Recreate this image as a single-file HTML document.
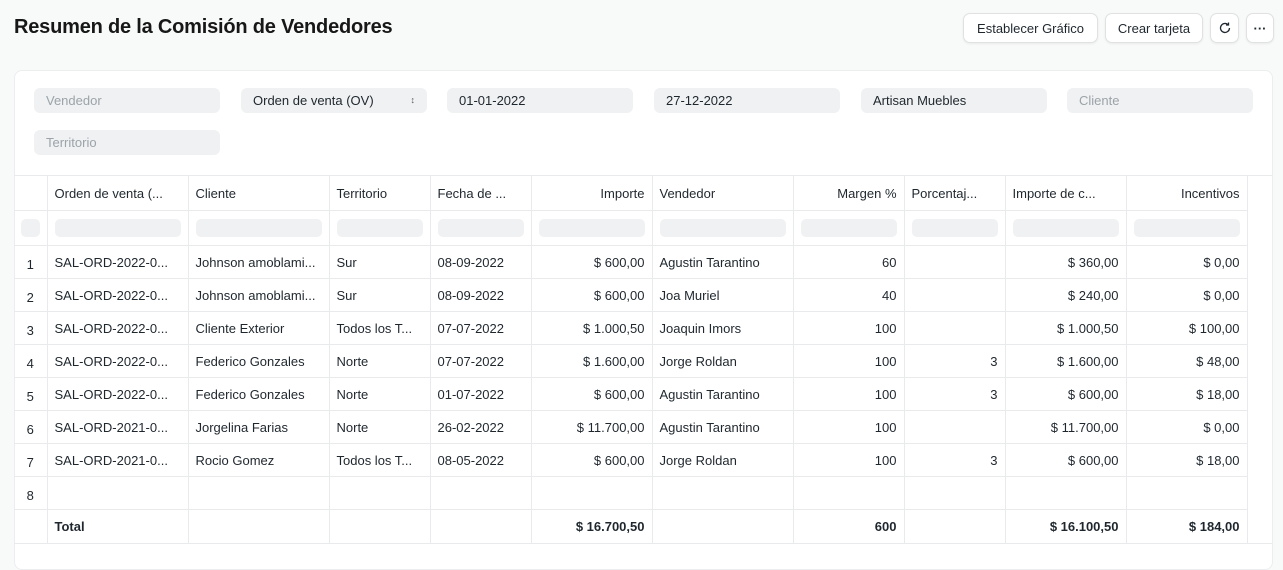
<!DOCTYPE html>
<html><head><meta charset="utf-8"><style>
*{box-sizing:border-box;margin:0;padding:0}
body{width:1283px;height:556px;overflow:hidden;background:#f8f9f9;font-family:"Liberation Sans",sans-serif;font-size:13px;color:#1f272e;position:relative}
h1{position:absolute;left:14px;top:16px;font-size:20px;font-weight:700;color:#171717;letter-spacing:-0.2px}
.btn{position:absolute;top:13px;height:30px;background:#fff;border:1px solid #dfe1e3;border-radius:7px;box-shadow:0 1px 2px rgba(0,0,0,.06);font-size:13px;display:flex;align-items:center;justify-content:center;color:#1f272e}
.card{position:absolute;left:14px;top:70px;width:1259px;height:500px;background:#fff;border:1px solid #ebedef;border-radius:8px}
.f{position:absolute;height:25px;width:186px;background:#f0f1f2;border-radius:6px;padding-left:12px;line-height:25px;font-size:13px;color:#1f272e}
.f.p{color:#9ca3a9}
table{position:absolute;left:-1px;top:104px;border-collapse:collapse;table-layout:fixed}
td{border:1px solid #e8eaec;height:33px;padding:0 7px;white-space:nowrap;overflow:hidden;font-size:13px}
tr.h td{height:35px}
tr.fl td{height:35px;padding:0 7px}
.r{text-align:right}
.n{padding:0 4px;vertical-align:bottom;padding-bottom:6px;text-align:center}
.bar{height:18px;background:#f0f1f2;border-radius:5px}
tr.t td{font-weight:700;height:34px}
td:first-child{border-left:none}
</style></head><body>
<h1>Resumen de la Comisión de Vendedores</h1>
<div class="btn" style="left:963px;width:135px">Establecer Gráfico</div>
<div class="btn" style="left:1105px;width:98px">Crear tarjeta</div>
<div class="btn" style="left:1210px;width:29px"><svg width="14" height="14" viewBox="0 0 14 14" fill="none" stroke="#1f272e" stroke-width="1.3"><path d="M11.5 7a4.5 4.5 0 1 1-1.4-3.3"/><path d="M10.5 1.5v2.5h-2.5"/></svg></div>
<div class="btn" style="left:1246px;width:28px;font-weight:700;letter-spacing:0px">···</div>
<div class="card">
<div class="f p" style="left:19px;top:17px">Vendedor</div>
<div class="f" style="left:226px;top:17px">Orden de venta (OV)<span style="position:absolute;right:12px;top:0;font-size:9px;color:#555">&#8597;</span></div>
<div class="f" style="left:432px;top:17px">01-01-2022</div>
<div class="f" style="left:639px;top:17px">27-12-2022</div>
<div class="f" style="left:846px;top:17px">Artisan Muebles</div>
<div class="f p" style="left:1052px;top:17px">Cliente</div>
<div class="f p" style="left:19px;top:59px">Territorio</div>
<table>
<colgroup><col style="width:33px"><col style="width:141px"><col style="width:141px"><col style="width:101px"><col style="width:101px"><col style="width:121px"><col style="width:141px"><col style="width:111px"><col style="width:101px"><col style="width:121px"><col style="width:121px"></colgroup>
<tr class="h"><td></td><td>Orden de venta (...</td><td>Cliente</td><td>Territorio</td><td>Fecha de ...</td><td class="r">Importe</td><td>Vendedor</td><td class="r">Margen %</td><td>Porcentaj...</td><td>Importe de c...</td><td class="r">Incentivos</td></tr>
<tr class="fl"><td style="padding:0 7px"><div class="bar"></div></td><td><div class="bar"></div></td><td><div class="bar"></div></td><td><div class="bar"></div></td><td><div class="bar"></div></td><td><div class="bar"></div></td><td><div class="bar"></div></td><td><div class="bar"></div></td><td><div class="bar"></div></td><td><div class="bar"></div></td><td><div class="bar"></div></td></tr>
<tr><td class="n">1</td><td>SAL-ORD-2022-0...</td><td>Johnson amoblami...</td><td>Sur</td><td>08-09-2022</td><td class="r">$ 600,00</td><td>Agustin Tarantino</td><td class="r">60</td><td></td><td class="r">$ 360,00</td><td class="r">$ 0,00</td></tr>
<tr><td class="n">2</td><td>SAL-ORD-2022-0...</td><td>Johnson amoblami...</td><td>Sur</td><td>08-09-2022</td><td class="r">$ 600,00</td><td>Joa Muriel</td><td class="r">40</td><td></td><td class="r">$ 240,00</td><td class="r">$ 0,00</td></tr>
<tr><td class="n">3</td><td>SAL-ORD-2022-0...</td><td>Cliente Exterior</td><td>Todos los T...</td><td>07-07-2022</td><td class="r">$ 1.000,50</td><td>Joaquin Imors</td><td class="r">100</td><td></td><td class="r">$ 1.000,50</td><td class="r">$ 100,00</td></tr>
<tr><td class="n">4</td><td>SAL-ORD-2022-0...</td><td>Federico Gonzales</td><td>Norte</td><td>07-07-2022</td><td class="r">$ 1.600,00</td><td>Jorge Roldan</td><td class="r">100</td><td class="r">3</td><td class="r">$ 1.600,00</td><td class="r">$ 48,00</td></tr>
<tr><td class="n">5</td><td>SAL-ORD-2022-0...</td><td>Federico Gonzales</td><td>Norte</td><td>01-07-2022</td><td class="r">$ 600,00</td><td>Agustin Tarantino</td><td class="r">100</td><td class="r">3</td><td class="r">$ 600,00</td><td class="r">$ 18,00</td></tr>
<tr><td class="n">6</td><td>SAL-ORD-2021-0...</td><td>Jorgelina Farias</td><td>Norte</td><td>26-02-2022</td><td class="r">$ 11.700,00</td><td>Agustin Tarantino</td><td class="r">100</td><td></td><td class="r">$ 11.700,00</td><td class="r">$ 0,00</td></tr>
<tr><td class="n">7</td><td>SAL-ORD-2021-0...</td><td>Rocio Gomez</td><td>Todos los T...</td><td>08-05-2022</td><td class="r">$ 600,00</td><td>Jorge Roldan</td><td class="r">100</td><td class="r">3</td><td class="r">$ 600,00</td><td class="r">$ 18,00</td></tr>
<tr><td class="n">8</td><td></td><td></td><td></td><td></td><td></td><td></td><td></td><td></td><td></td><td></td></tr>
<tr class="t"><td></td><td>Total</td><td></td><td></td><td></td><td class="r">$ 16.700,50</td><td></td><td class="r">600</td><td></td><td class="r">$ 16.100,50</td><td class="r">$ 184,00</td></tr>
</table>
<div style="position:absolute;left:0;top:104px;width:1257px;border-top:1px solid #e8eaec"></div>
<div style="position:absolute;left:0;top:472px;width:1257px;border-top:1px solid #e8eaec"></div>
</div>
</body></html>
